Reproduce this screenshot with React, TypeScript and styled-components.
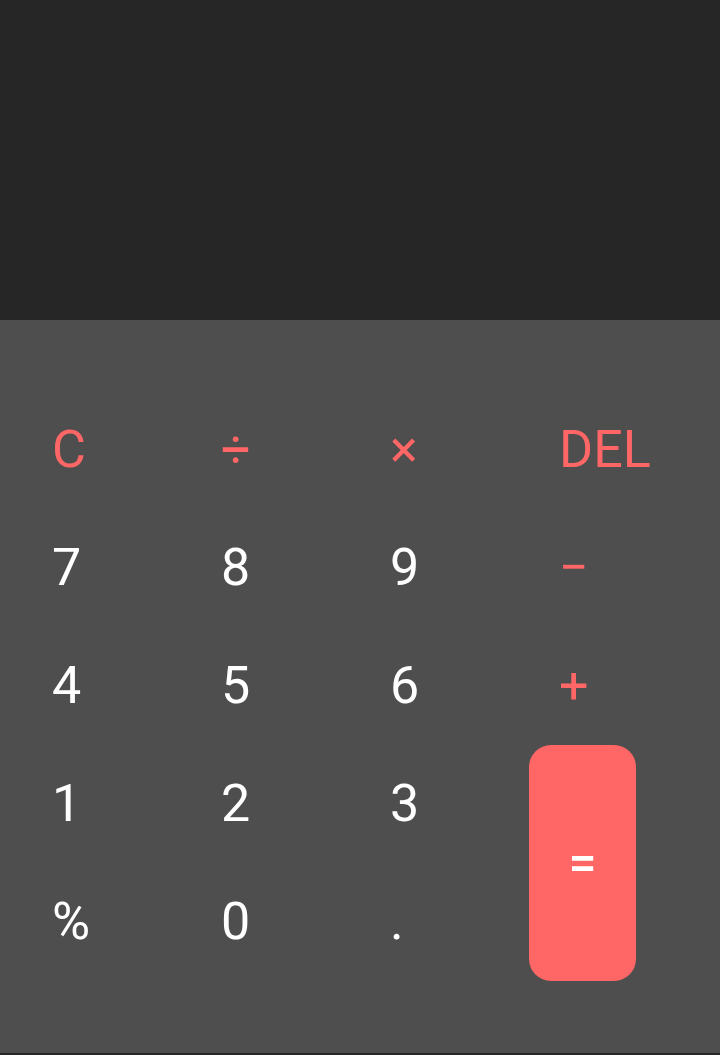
import * as React from 'react';
import styled, { createGlobalStyle } from 'styled-components';

const GlobalStyle = createGlobalStyle`
  html, body {
    margin: 0;
    padding: 0;
    background: #262626;
    font-family: Roboto, "Noto Sans", sans-serif;
  }
`;

type Key = {
  label: string;
  accent?: boolean;
};

const keys: Key[] = [
  { label: 'C', accent: true }, { label: '÷', accent: true }, { label: '×', accent: true }, { label: 'DEL', accent: true },
  { label: '7' }, { label: '8' }, { label: '9' }, { label: '−', accent: true },
  { label: '4' }, { label: '5' }, { label: '6' }, { label: '+', accent: true },
  { label: '1' }, { label: '2' }, { label: '3' },
  { label: '%' }, { label: '0' }, { label: '.' },
];

export default function App() {
  return (
    <>
      <GlobalStyle />
      <Screen>
        <Display />
        <Keypad>
          {keys.map((k, i) => (
            <KeyButton key={i} $accent={k.accent}>
              {k.label}
            </KeyButton>
          ))}
          <EqualsButton>=</EqualsButton>
        </Keypad>
      </Screen>
    </>
  );
}

const Screen = styled.div`
  display: flex;
  flex-direction: column;
  width: 720px;
  height: 1055px;
`;

const Display = styled.div`
  height: 320px;
  background: #262626;
`;

const Keypad = styled.div`
  height: 733px;
  box-sizing: border-box;
  padding: 71px 22px 0;
  background: #4e4e4e;
  display: grid;
  grid-template-columns: repeat(4, 169px);
  grid-template-rows: repeat(5, 118px);
  grid-auto-flow: row;
`;

const KeyButton = styled.div<{ $accent?: boolean }>`
  display: flex;
  align-items: center;
  padding-left: 30px;
  font-size: 52px;
  line-height: 1;
  color: ${(p) => (p.$accent ? '#ff6666' : '#ffffff')};
`;

const EqualsButton = styled.div`
  grid-column: 4;
  grid-row: 4 / span 2;
  width: 107px;
  height: 236px;
  border-radius: 22px;
  background: #ff6666;
  color: #ffffff;
  font-size: 50px;
  font-weight: 500;
  display: flex;
  align-items: center;
  justify-content: center;
`;
